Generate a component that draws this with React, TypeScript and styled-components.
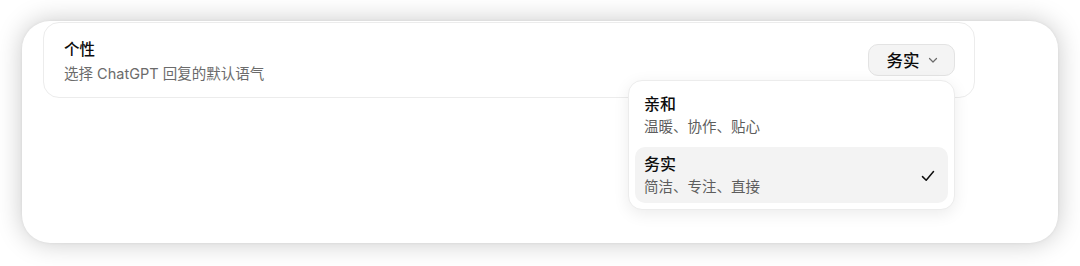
import styled, { createGlobalStyle } from "styled-components";

const GlobalStyle = createGlobalStyle`
    html, body {
        margin: 0;
        padding: 0;
        background: #ffffff;
    }
    body {
        font-family: "Inter", "Noto Sans CJK SC", sans-serif;
        color: #0d0d0d;
    }
`;

const Page = styled.div`
    width: 1080px;
    height: 266px;
    padding: 21px 0 0 22px;
    box-sizing: border-box;
    overflow: hidden;
`;

const Panel = styled.div`
    width: 1036px;
    height: 222px;
    box-sizing: border-box;
    background: #ffffff;
    border-radius: 28px;
    box-shadow: 0 0 26px rgba(0, 0, 0, 0.22), 0 0 3px rgba(0, 0, 0, 0.06);
    padding: 1px 0 0 21px;
`;

const SettingCard = styled.div`
    width: 932px;
    height: 76px;
    box-sizing: border-box;
    border: 1px solid #ececec;
    border-radius: 16px;
    padding: 0 19px 0 20px;
    display: flex;
    align-items: center;
    justify-content: space-between;
`;

const Labels = styled.div`
    display: flex;
    flex-direction: column;
    gap: 4px;
    margin-top: 3px;
`;

const Title = styled.div`
    font-size: 15.5px;
    line-height: 20px;
    font-weight: 500;
    color: #0d0d0d;
`;

const Hint = styled.div`
    font-size: 14.5px;
    line-height: 20px;
    color: #6b6b6b;
`;

const SelectWrap = styled.div`
    position: relative;
    margin-top: -1px;
`;

const SelectButton = styled.button`
    height: 32px;
    width: 87px;
    box-sizing: border-box;
    display: flex;
    align-items: center;
    justify-content: center;
    gap: 7px;
    padding: 0 0 0 2px;
    border: 1px solid #e3e3e3;
    border-radius: 10px;
    background: #f4f4f4;
    font-family: inherit;
    font-size: 16.5px;
    font-weight: 500;
    color: #0d0d0d;
    cursor: pointer;
`;

const Menu = styled.div`
    position: absolute;
    top: 36px;
    right: 0;
    width: 327px;
    box-sizing: border-box;
    padding: 6px;
    background: #ffffff;
    border: 1px solid #ececec;
    border-radius: 14px;
    box-shadow: 0 4px 16px rgba(0, 0, 0, 0.08);
    display: flex;
    flex-direction: column;
    gap: 4px;
    z-index: 2;
`;

const Option = styled.div<{ $active?: boolean }>`
    height: 56px;
    box-sizing: border-box;
    padding: 7px 12px 0 9px;
    border-radius: 10px;
    background: ${(p) => (p.$active ? "#f3f3f3" : "transparent")};
    display: flex;
    align-items: center;
    justify-content: space-between;
`;

const OptionText = styled.div`
    display: flex;
    flex-direction: column;
    gap: 3px;
    align-self: flex-start;
`;

const OptionTitle = styled.div`
    font-size: 16px;
    line-height: 20px;
    font-weight: 500;
    color: #0d0d0d;
`;

const OptionHint = styled.div`
    font-size: 14.5px;
    line-height: 20px;
    color: #5d5d5d;
`;

const Check = () => (
    <svg width="16" height="16" viewBox="0 0 16 16" fill="none" style={{ marginTop: -4 }}>
        <path d="M2.5 8.6 L6.2 12.2 L13.5 3.6" stroke="#0d0d0d" strokeWidth="1.5" strokeLinecap="round" strokeLinejoin="round" />
    </svg>
);

const Chevron = () => (
    <svg width="12" height="12" viewBox="0 0 12 12" fill="none">
        <path d="M2.5 4.5 L6 8 L9.5 4.5" stroke="#6b6b6b" strokeWidth="1.2" strokeLinecap="round" strokeLinejoin="round" />
    </svg>
);

const options = [
    { title: "亲和", hint: "温暖、协作、贴心" },
    { title: "务实", hint: "简洁、专注、直接" },
];

export default function App() {
    const selected = 1;

    return (
        <>
            <GlobalStyle />
            <Page>
                <Panel>
                    <SettingCard>
                        <Labels>
                            <Title>个性</Title>
                            <Hint>选择 ChatGPT 回复的默认语气</Hint>
                        </Labels>
                        <SelectWrap>
                            <SelectButton>
                                {options[selected].title}
                                <Chevron />
                            </SelectButton>
                            <Menu>
                                {options.map((o, index) => (
                                    <Option key={index} $active={index == selected}>
                                        <OptionText>
                                            <OptionTitle>{o.title}</OptionTitle>
                                            <OptionHint>{o.hint}</OptionHint>
                                        </OptionText>
                                        {index == selected && <Check />}
                                    </Option>
                                ))}
                            </Menu>
                        </SelectWrap>
                    </SettingCard>
                </Panel>
            </Page>
        </>
    );
}
